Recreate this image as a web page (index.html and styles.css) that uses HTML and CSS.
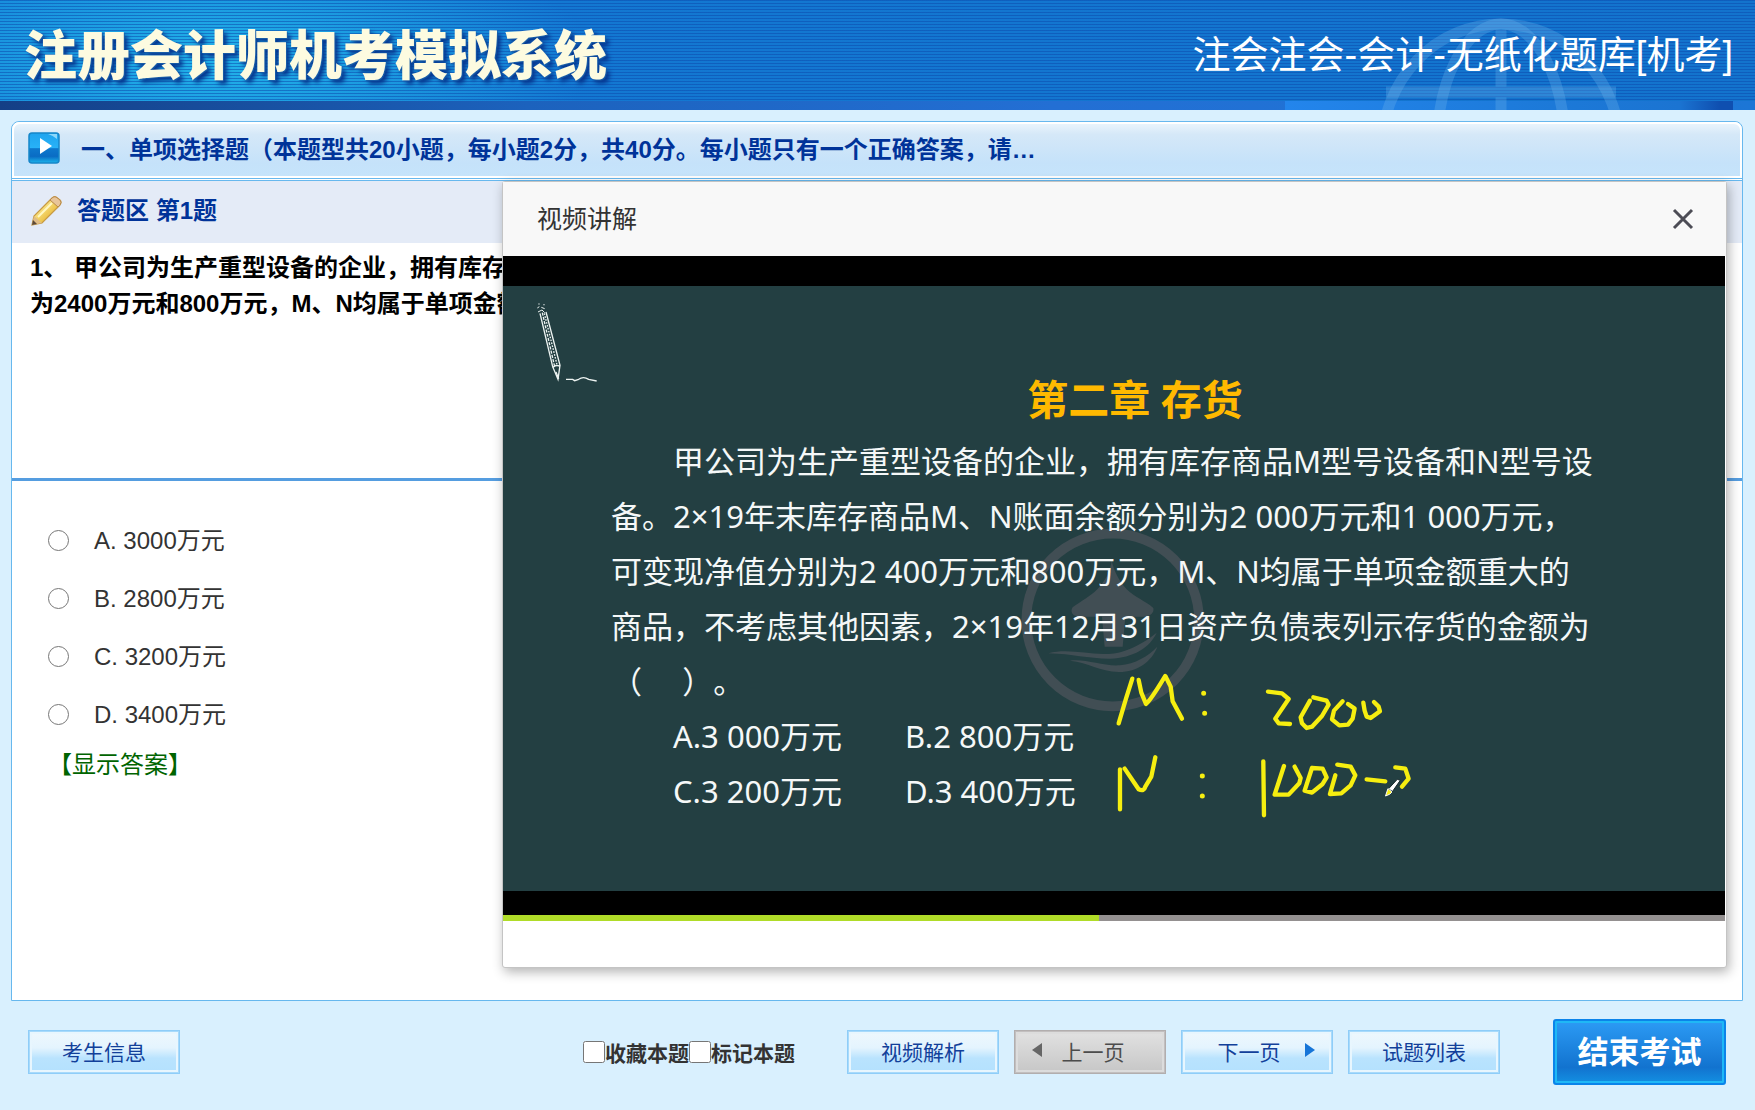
FILE: index.html
```html
<!DOCTYPE html>
<html lang="zh-CN">
<head>
<meta charset="utf-8">
<title>注册会计师机考模拟系统</title>
<link rel="stylesheet" href="styles.css">
</head>
<body>
<header class="banner">
  <svg class="globe" viewBox="0 0 250 92" aria-hidden="true">
    <g fill="none" stroke="#6db4ea" stroke-opacity=".3" stroke-width="11">
      <ellipse cx="125" cy="130" rx="119" ry="124"/>
      <ellipse cx="125" cy="130" rx="64" ry="124"/>
      <path d="M125 12V92M10 74H240"/>
    </g>
  </svg>
  <h1 class="logo">注册会计师机考模拟系统</h1>
  <p class="exam-name">注会注会-会计-无纸化题库[机考]</p>
</header>

<main class="panel">
  <div class="section-bar">
    <svg class="play" viewBox="0 0 32 32" aria-hidden="true">
      <defs>
        <linearGradient id="play-fill" x1="0" y1="0" x2="0" y2="1">
          <stop offset="0" stop-color="#1fa4ee"/><stop offset=".5" stop-color="#28b2f8"/>
          <stop offset=".52" stop-color="#0d78cd"/><stop offset=".78" stop-color="#0a6cc4"/>
          <stop offset="1" stop-color="#1cb6ec"/>
        </linearGradient>
      </defs>
      <rect x="1" y="1" width="30" height="30" rx="3" fill="url(#play-fill)" stroke="#1686c9" stroke-width="1.5"/>
      <path d="M20 2h9v5q-3-3-9-5z" fill="#b9ecff" opacity=".7"/>
      <path d="M12 6l12 8-12 8z" fill="#fff"/>
    </svg>
    <h2 class="section-title">一、单项选择题（本题型共20小题，每小题2分，共40分。每小题只有一个正确答案，请…</h2>
  </div>

  <div class="answer-bar">
    <svg class="pencil" viewBox="0 0 32 32" aria-hidden="true">
      <defs>
        <linearGradient id="pencil-fill" x1="0" y1="0" x2="1" y2="1">
          <stop offset=".3" stop-color="#fbe98e"/><stop offset=".7" stop-color="#e9b93a"/>
        </linearGradient>
      </defs>
      <path d="M2 30l2-9L22 3q2-2 4-1l4 3q2 2 0 5L12 28z" fill="url(#pencil-fill)" stroke="#c79a45" stroke-width="1.2"/>
      <path d="M22 3q2-2 4-1l4 3q2 2 0 5l-2 2-8-7z" fill="#e8c59a" stroke="#b98a4a"/>
      <path d="M4 21l8 7-10 2z" fill="#e0bd85"/>
      <path d="M2 30l1-5 4 4z" fill="#5d4a3a"/>
      <path d="M8 22L22 8" stroke="#fff7c4" stroke-width="2"/>
    </svg>
    <h3 class="answer-title">答题区 第1题</h3>
  </div>

  <div class="question">
    <p>1、 甲公司为生产重型设备的企业，拥有库存商品M型号设备和N型号设备。2×19年末库存商品M、N账面余额分别为2000万元和1000万元，可变现净值分别</p>
    <p>为2400万元和800万元，M、N均属于单项金额重大的商品，不考虑其他因素，2×19年12月31日资产负债表列示存货的金额为（ ）。</p>
  </div>

  <form class="options">
    <label class="option"><input type="radio" name="answer" value="A"><span>A. 3000万元</span></label>
    <label class="option"><input type="radio" name="answer" value="B"><span>B. 2800万元</span></label>
    <label class="option"><input type="radio" name="answer" value="C"><span>C. 3200万元</span></label>
    <label class="option"><input type="radio" name="answer" value="D"><span>D. 3400万元</span></label>
    <a class="show-answer" href="#answer">【显示答案】</a>
  </form>
</main>

<footer class="toolbar">
  <button class="btn" type="button">考生信息</button>
  <div class="marks">
    <label><input type="checkbox">收藏本题</label><label><input type="checkbox">标记本题</label>
  </div>
  <nav class="pager">
    <button class="btn" type="button">视频解析</button>
    <button class="btn btn-prev" type="button">
      <svg class="arrow arrow-left" viewBox="0 0 10 14" aria-hidden="true"><path d="M10 0v14L0 7z"/></svg>上一页</button>
    <button class="btn btn-next" type="button">下一页
      <svg class="arrow arrow-right" viewBox="0 0 10 14" aria-hidden="true"><path d="M0 0v14l10-7z"/></svg></button>
    <button class="btn" type="button">试题列表</button>
  </nav>
  <button class="finish" type="button">结束考试</button>
</footer>

<section class="modal" role="dialog" aria-labelledby="modal-title">
  <div class="modal-head">
    <h2 class="modal-title" id="modal-title">视频讲解</h2>
    <button class="close" type="button" aria-label="关闭">
      <svg viewBox="0 0 22 22" aria-hidden="true"><path d="M2 2l18 18M20 2L2 20" stroke="#4c4c55" stroke-width="3" fill="none"/></svg>
    </button>
  </div>
  <div class="player">
    <div class="slide">
      <svg class="ink" viewBox="0 0 1222 605" preserveAspectRatio="xMidYMin meet" aria-hidden="true">
        <g transform="translate(497 214) scale(.3333)" fill="none" stroke-linecap="round" stroke-linejoin="round">
          <g>
            <circle cx="338" cy="360" r="259" stroke="#414e54" stroke-width="29"/>
            <path stroke="none" fill="#414e54" d="M335 180c5 30 22 62 45 88 24 24 55 34 80 56 3 14-8 24-24 26h-60l-8 90h-54l-8-90h-70c-20-2-26-16-18-28 25-18 52-32 74-54 25-26 40-56 43-88zM145 460c80-20 150 20 230-8 40-14 70-34 95-54-20 44-70 76-140 78-70 0-110-14-185-16zM210 482c50-6 100 18 150 14 45-4 85-28 112-56-16 44-60 76-115 76-60-2-90-28-147-34z"/>
          </g>
          <g stroke="#f6ee10" stroke-width="13">
            <path d="M397 536L378 596 356 670M416 540L424 578 438 612Q450 604 496 528L512 560 518 604 546 656"/>
            <path d="M611 580v0M614 640v0" stroke-width="15"/>
            <path d="M804 575L846 580 866 597 826 656 836 670 870 672"/>
            <path d="M930 602L902 652 906 670 920 684 936 680 966 648 986 614 980 602 940 592M1028 604L1002 632 996 658 1018 676 1044 674 1058 656 1064 626 1044 612M1090 608L1094 632 1100 650 1112 654 1140 634 1136 620 1122 606"/>
            <path d="M360 808V928M374 806L416 868Q432 876 436 860L454 830 466 772"/>
            <path d="M607 828v0M607 888v0" stroke-width="15"/>
            <path d="M790 784L792 946M852 798L824 884 866 884 898 850 902 834 884 800M936 804L914 872 936 878 968 852 980 832 968 806 936 804M1006 826L990 882 1024 880 1052 856 1066 826 1052 800 1012 794"/>
            <path d="M1100 838L1156 844M1186 802L1216 806 1226 836 1206 860"/>
          </g>
          <path d="M1166 866L1192 838 1201 841 1178 874z" fill="#fff" stroke="#16292b" stroke-width="3"/>
          <path d="M1157 887L1164 866 1176 876 1170 882z" fill="#f6ee10" stroke="#fff" stroke-width="3"/>
        </g>
        <g transform="translate(27 4) scale(.3333)" fill="none" stroke="#eef4f2" stroke-width="4">
          <path d="M30 70L68 230 84 268 90 226 48 66"/>
          <path d="M37 68L74 230" stroke-dasharray="9 4"/>
          <path d="M43 70L82 228" stroke-dasharray="5 4"/>
          <path d="M68 232l10-6 12 2M78 246l8 20"/>
          <path d="M22 54l6-4M24 66l12-6 8 8M34 52l10 4M27 40v4M42 42v4" stroke-width="3"/>
          <path d="M108 268h20l6 4 12-4q14-10 30 0l24 5"/>
        </g>
      </svg>
      <div class="slide-text">
        <h3 class="chapter">第二章 存货</h3>
        <p class="first">甲公司为生产重型设备的企业，拥有库存商品M型号设备和N型号设</p>
        <p>备。2×19年末库存商品M、N账面余额分别为2 000万元和1 000万元，</p>
        <p>可变现净值分别为2 400万元和800万元，M、N均属于单项金额重大的</p>
        <p>商品，不考虑其他因素，2×19年12月31日资产负债表列示存货的金额为</p>
        <p class="blank">（&nbsp;&nbsp;&nbsp;&nbsp;&nbsp;）。</p>
        <div class="choices">
          <span>A.3 000万元</span><span>B.2 800万元</span>
          <span>C.3 200万元</span><span>D.3 400万元</span>
        </div>
      </div>
    </div>
    <div class="progress"><div class="played" style="width:48.8%"></div></div>
  </div>
</section>
</body>
</html>
```
FILE: styles.css
```css
* { box-sizing: border-box; }

body {
  margin: 0;
  min-height: 100vh;
  display: flex;
  flex-direction: column;
  position: relative;
  background: #d9f0fe;
  color: #333;
  font-family: "Liberation Sans", "Noto Sans CJK SC", sans-serif;
  font-size: 24px;
}

h1, h2, h3, p { margin: 0; }
svg { display: block; }
button, input { font: inherit; margin: 0; }

/* top banner */
.banner {
  position: relative;
  flex: none;
  height: 110px;
  padding: 4px 22px 0 24px;
  display: flex;
  align-items: center;
  justify-content: space-between;
  overflow: hidden;
  background:
    linear-gradient(90deg, #2385ec, #1c79d8 60%, #1b74d2 88%, #0f4fb0 97%) calc(100% - 22px) 100% / 448px 9px no-repeat,
    linear-gradient(90deg, #143f86, #1c62bd 30%, #236fd4 60%, #1c76d6) 0 100% / 100% 9px no-repeat,
    repeating-linear-gradient(#0c4cae8c 0 1px, transparent 1px 3px),
    radial-gradient(ellipse 380px 130px at 215px 60px, #22b4ea, transparent),
    linear-gradient(90deg, #1480d8, #1378d2 30%, #1373cd);
}
.globe {
  position: absolute;
  right: 129px;
  bottom: 0;
  width: 250px;
}
.logo {
  position: relative;
  font-size: 53px;
  line-height: 60px;
  font-weight: 900;
  color: #fdfbe0;
  text-shadow: 1px 1px 1px #1a5fa8, 4px 4px 4px #06368f;
}
.exam-name {
  position: relative;
  margin-bottom: 4px;
  font-size: 38px;
  line-height: 60px;
  color: #fff;
}

/* main panel */
.panel {
  flex: 1;
  margin: 11px 12px 0 11px;
  border: 1px solid #67b8ee;
  border-radius: 8px 8px 0 0;
  background: #fff;
}
.section-bar {
  height: 56px;
  padding: 0 14px;
  display: flex;
  align-items: center;
  gap: 21px;
  border: 2px solid #fff;
  border-radius: 8px 8px 0 0;
  box-shadow: 0 1px #67b8ee;
  background: linear-gradient(#e9f4fc, #d5e8f8 20%, #c5e2fa 75%, #c6e4fb);
}
.play { flex: none; width: 32px; height: 32px; margin-bottom: 4px; }
.section-title {
  font-size: 24px;
  line-height: 32px;
  color: #003399;
  white-space: nowrap;
  overflow: hidden;
}
.answer-bar {
  height: 63px;
  margin-top: 2px;
  padding: 0 18px 2px;
  display: flex;
  align-items: center;
  gap: 15px;
  border-top: 1px solid #67b8ee;
  background: #e4ebf7;
}
.pencil { flex: none; width: 32px; height: 32px; }
.answer-title { font-size: 24px; line-height: 32px; color: #003399; }
.question {
  height: 238px;
  padding: 7px 18px;
  overflow: hidden;
  border-bottom: 3px solid #559de0;
  color: #000;
  font-weight: bold;
  line-height: 36px;
  white-space: nowrap;
}
.question p { overflow: hidden; }
.options {
  padding: 30px 36px;
  display: flex;
  flex-direction: column;
  align-items: flex-start;
}
.option {
  height: 58px;
  display: flex;
  align-items: center;
  gap: 25px;
}
.option input { width: 21px; height: 21px; }
.option span { padding-bottom: 4px; }
.show-answer {
  line-height: 44px;
  color: #006400;
  text-decoration: none;
  text-spacing-trim: space-all;
}

/* bottom toolbar */
.toolbar {
  flex: none;
  height: 109px;
  padding: 0 29px 8px 28px;
  display: flex;
  align-items: center;
}
.btn {
  position: relative;
  width: 152px;
  height: 44px;
  padding: 0 0 2px;
  border: 1px solid #8fcdf8;
  outline: 1px solid #a8dafb;
  outline-offset: -2px;
  box-shadow: inset 0 0 0 3px #e8f6fe;
  background: linear-gradient(#eff8fd, #e4f4fe 40%, #b9e3fe 65%, #b4e1fe);
  color: #12409a;
  font-size: 21px;
}
.btn-prev {
  padding-left: 6px;
  border-color: #b2aeae;
  outline-color: #c2bfbf;
  box-shadow: inset 0 0 0 3px #dcdcdc;
  background: linear-gradient(#e2e2e2, #c6c6c6);
  color: #4c4c4c;
}
.btn-next { padding-right: 16px; }
.arrow { position: absolute; top: 12px; width: 10px; height: 14px; }
.arrow-left { left: 17px; fill: #666; }
.arrow-right { right: 17px; fill: #1675d8; }
.marks {
  margin-left: auto;
  margin-right: 52px;
  display: flex;
  color: #333;
  font-size: 21px;
  font-weight: bold;
}
.marks label { display: flex; align-items: center; }
.marks input { width: 22px; height: 22px; }
.pager { display: flex; gap: 15px; }
.finish {
  width: 173px;
  height: 66px;
  margin-left: 53px;
  padding: 0 0 4px;
  border: 2px solid #0b84ea;
  border-radius: 3px;
  box-shadow: inset 0 0 0 2px #1fb8f6;
  background: linear-gradient(#2c9bf5, #1273cf 75%, #1390e2);
  color: #fff;
  font-size: 31px;
  font-weight: bold;
}

/* floating video window */
.modal {
  position: absolute;
  top: 181px;
  left: 502px;
  right: 28px;
  padding-bottom: 46px;
  border: 1px solid #c4c4c4;
  border-radius: 3px;
  background: #fff;
  box-shadow: 2px 4px 12px #0000004d;
}
.modal-head {
  height: 74px;
  padding: 0 32px 0 34px;
  display: flex;
  align-items: center;
  justify-content: space-between;
  background: #f8f8f8;
}
.modal-title {
  padding-bottom: 4px;
  font-size: 25px;
  font-weight: normal;
  color: #333;
}
.close {
  width: 22px;
  height: 22px;
  padding: 0;
  border: 0;
  background: none;
}
.player {
  margin-right: 1px;
  padding-top: 30px;
  background: #000;
}
.slide {
  position: relative;
  padding: 85px 80px 72px 108px;
  background: #233f42;
  color: #f5f8f8;
}
.ink { position: absolute; inset: 0; width: 100%; height: 100%; }
.slide-text {
  position: relative;
  font-family: "Noto Sans", "Noto Sans CJK SC", sans-serif;
  font-size: 31px;
  line-height: 55px;
  white-space: nowrap;
}
.chapter {
  padding-left: 14px;
  margin-bottom: 7px;
  font-size: 41px;
  line-height: 56px;
  text-align: center;
  color: #ffb900;
}
.first { text-indent: 62px; }
.blank { text-spacing-trim: space-all; }
.choices {
  padding-left: 62px;
  display: grid;
  grid-template-columns: 232px auto;
}
.progress {
  margin-top: 24px;
  height: 6px;
  background: #949090;
}
.played { height: 100%; background: #b0dc28; }
```
